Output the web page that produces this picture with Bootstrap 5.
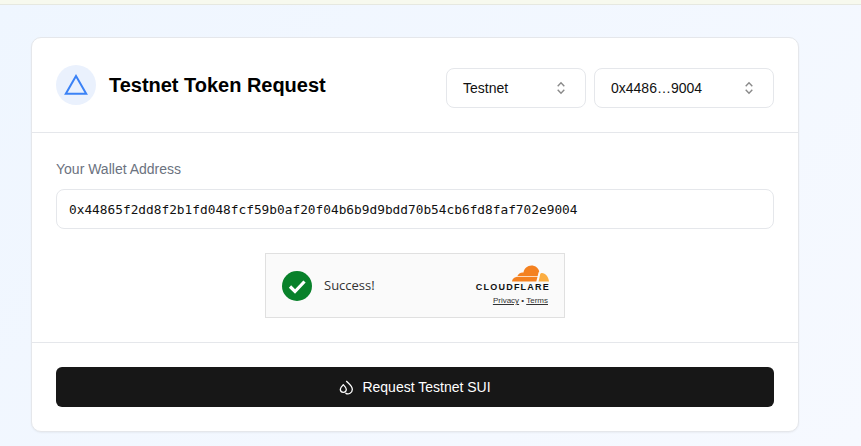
<!DOCTYPE html>
<html lang="en">
<head>
    <meta charset="UTF-8">
    <title>Testnet Token Request</title>
    <link href="https://cdn.jsdelivr.net/npm/bootstrap@5.3.3/dist/css/bootstrap.min.css" rel="stylesheet">
    <style>
        html, body { height: 100%; }
        body {
            font-family: "Liberation Sans", Arial, sans-serif;
            background: linear-gradient(135deg, #eff6ff, #f6f9ff);
            overflow: hidden;
        }
        .top-strip { height: 5px; background: #f7f9ee; border-bottom: 1px solid #e6e8e0; }
        .page-wrap { padding: 32px 0 0 31px; }
        .faucet-card {
            width: 768px; height: 395px;
            background: #fff;
            border: 1px solid #e5e7eb;
            border-radius: 10px;
            box-shadow: 0 1px 2px rgba(0,0,0,.05);
        }
        .faucet-head { height: 95px; padding: 0 24px; border-bottom: 1px solid #e5e7eb; }
        .logo-circle { width: 40px; height: 40px; border-radius: 50%; background: #eaf1fd; }
        .faucet-title { font-size: 20px; line-height: 28px; font-weight: 700; color: #000; margin: 0 0 0 13px; letter-spacing: -.02px; }
        .pick-row { margin-top: 6px; }
        .pick-box {
            height: 40px; padding: 0 16px;
            border: 1px solid #e5e7eb; border-radius: 8px;
            font-size: 14px; color: #111;
        }
        .pick-net { width: 140px; }
        .pick-addr { width: 180px; }
        .faucet-body { height: 210px; padding: 26px 24px 0; border-bottom: 1px solid #e5e7eb; }
        .wallet-label { font-size: 14px; line-height: 20px; color: #6b7280; margin-bottom: 10px; display: block; }
        .wallet-box {
            height: 40px; padding: 0 12px; line-height: 40px;
            border: 1px solid #e5e7eb; border-radius: 8px;
            font-family: "DejaVu Sans Mono", monospace; font-size: 12.8px; color: #111;
            white-space: nowrap;
        }
        .turnstile {
            width: 300px; height: 65px; margin: 24px auto 0;
            background: #fafafa; border: 1px solid #e0e0e0;
            padding: 0 15px 0 16px;
        }
        .ok-text { font-family: "Open Sans", sans-serif; font-size: 13px; color: #333; margin-left: 12px; }
        .cf-side { width: 76px; }
        .cf-word { font-family: "Liberation Sans", sans-serif; font-size: 9px; font-weight: 700; letter-spacing: 1.22px; margin-top: 1px; margin-right: -1px; line-height: 9px; color: #111; white-space: nowrap; }
        .cf-links { font-size: 8px; line-height: 10px; color: #333; margin-top: 4px; margin-right: 1px; white-space: nowrap; }
        .cf-links a { color: #333; }
        .faucet-foot { padding: 24px; }
        .request-btn {
            height: 40px; width: 100%;
            background: #171717; color: #fff; border: 0; border-radius: 6px;
            font-size: 14px; font-family: "Liberation Sans", sans-serif;
        }
    </style>
</head>
<body>
    <div class="top-strip"></div>
    <div class="page-wrap">
        <div class="faucet-card">
            <div class="faucet-head d-flex align-items-center">
                <div class="logo-circle d-flex align-items-center justify-content-center flex-shrink-0">
                    <svg width="24" height="22" viewBox="0 0 24 22"><path d="M12 2 L22.200 19.800 H1.800 Z" fill="none" stroke="#3b82f6" stroke-width="2"/></svg>
                </div>
                <h1 class="faucet-title">Testnet Token Request</h1>
                <div class="pick-row d-flex gap-2 ms-auto">
                    <div class="pick-box pick-net d-flex align-items-center justify-content-between">
                        <span>Testnet</span>
                        <svg width="16" height="16" viewBox="0 0 16 16" fill="none" stroke="#8a8a8a" stroke-width="1.4"><path d="M4.700 6.200 8 2.800l3.300 3.400M4.700 9.800 8 13.200l3.300-3.400"/></svg>
                    </div>
                    <div class="pick-box pick-addr d-flex align-items-center justify-content-between">
                        <span>0x4486…9004</span>
                        <svg width="16" height="16" viewBox="0 0 16 16" fill="none" stroke="#8a8a8a" stroke-width="1.4"><path d="M4.700 6.200 8 2.800l3.300 3.400M4.700 9.800 8 13.200l3.300-3.400"/></svg>
                    </div>
                </div>
            </div>
            <div class="faucet-body">
                <label class="wallet-label">Your Wallet Address</label>
                <div class="wallet-box">0x44865f2dd8f2b1fd048fcf59b0af20f04b6b9d9bdd70b54cb6fd8faf702e9004</div>
                <div class="turnstile d-flex align-items-center">
                    <svg width="30" height="30" viewBox="0 0 30 30"><circle cx="15" cy="15" r="15" fill="#08812a"/><path d="M8 15.500l5 5 9.500-10" fill="none" stroke="#fff" stroke-width="3.200"/></svg>
                    <span class="ok-text">Success!</span>
                    <div class="cf-side ms-auto d-flex flex-column align-items-end">
                        <svg width="37" height="17" viewBox="0 0 37 17" class="d-block">
                            <path d="M0 16.600c.2-2.600 2-4.400 4.400-4.600.5-.1.8-.3.9-.7C6.300 8.600 9 7 11.500 7.500c.5-3.900 4-7 8-7 3.500 0 6.500 2.200 7.600 5.400.2.700-.2 1-.6 1.500-.7 2.900-1.300 6-2.200 9.200z" fill="#f48120"/>
                            <path d="M26.500 16.600c.6-2.400 1.200-4.900 1.600-7.100.2-.9.600-1.500 1.500-1.600 3.700-.2 7 3.400 7.400 8.700z" fill="#fbad41"/>
                            <path d="M5 11.500h21.500" stroke="#fff" stroke-width=".7"/>
                        </svg>
                        <div class="cf-word">CLOUDFLARE</div>
                        <div class="cf-links"><a href="#">Privacy</a> &bull; <a href="#">Terms</a></div>
                    </div>
                </div>
            </div>
            <div class="faucet-foot">
                <button class="request-btn d-flex align-items-center justify-content-center gap-2">
                    <svg width="15" height="15" viewBox="0 0 15 15" fill="none" stroke="#fff" stroke-width="1.300"><path d="M4.300 4.800C3 6.100 1.300 7.400 1.300 9.300a3 3 0 0 0 6 0C7.300 7.400 5.600 6.100 4.300 4.800zM7.300 1C9 3 13.300 5.500 13.300 9.300a4.400 4.400 0 0 1-6.800 3.800"/></svg>
                    <span>Request Testnet SUI</span>
                </button>
            </div>
        </div>
    </div>
    <script src="https://cdn.jsdelivr.net/npm/bootstrap@5.3.3/dist/js/bootstrap.bundle.min.js"></script>
</body>
</html>
